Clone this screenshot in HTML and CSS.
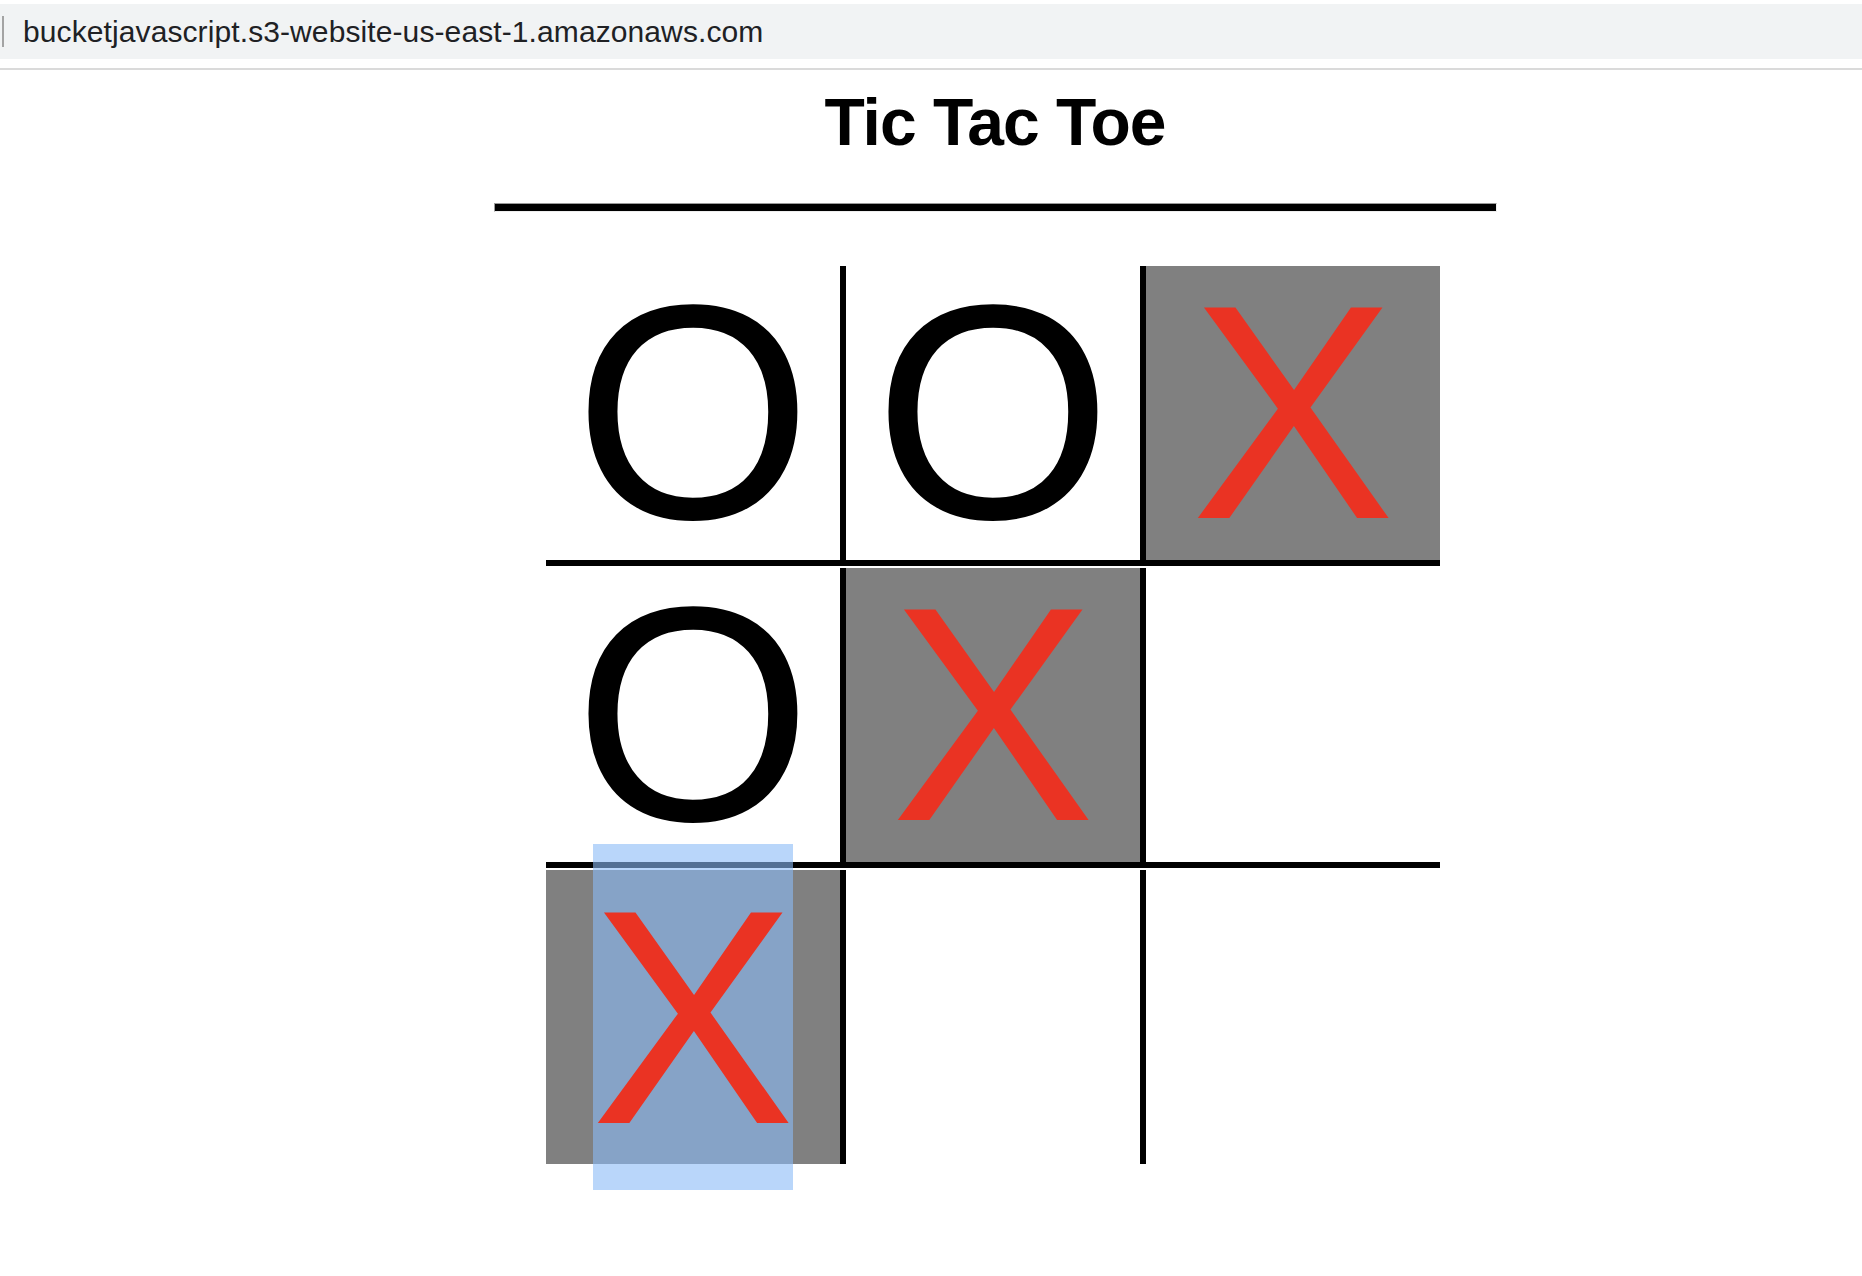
FILE: index.html
```html
<!DOCTYPE html>
<html lang="en">
<head>
<meta charset="utf-8">
<title>Tic Tac Toe</title>
<link rel="stylesheet" href="styles.css">
</head>
<body>
<div class="chrome">
  <div class="urlbar">
    <span class="caret"></span>
    <span class="url">bucketjavascript.s3-website-us-east-1.amazonaws.com</span>
  </div>
  <div class="chrome-line"></div>
</div>
<main class="page">
  <h1 class="title">Tic Tac Toe</h1>
  <hr class="rule">
  <div class="board">
    <div class="cell">O</div>
    <div class="cell mid">O</div>
    <div class="cell win x">X</div>
    <div class="cell">O</div>
    <div class="cell mid win x">X</div>
    <div class="cell"></div>
    <div class="cell last win x"><span class="sel">X</span></div>
    <div class="cell mid last"></div>
    <div class="cell last"></div>
  </div>
</main>
</body>
</html>
```

FILE: styles.css
```css
html, body {
  margin: 0;
  padding: 0;
  background: #ffffff;
}

body {
  min-height: 1276px;
}

.chrome {
  padding-top: 4px;
}

.urlbar {
  height: 55px;
  background: #f1f3f4;
  display: flex;
  align-items: center;
  padding-left: 2px;
}

.caret {
  width: 2px;
  height: 31px;
  background: #a3a3a3;
  margin-right: 19px;
}

.url {
  font-family: "Liberation Sans", Arial, sans-serif;
  font-size: 30px;
  line-height: 55px;
  letter-spacing: 0.1px;
  color: #202124;
}

.chrome-line {
  height: 2px;
  background: #dadada;
  margin-top: 9px;
}

.page {
  padding-left: 128px;
  padding-bottom: 112px;
  display: flex;
  flex-direction: column;
  align-items: center;
  font-family: "Liberation Sans", Arial, sans-serif;
}

.title {
  margin: 14px 0 0;
  font-size: 66px;
  line-height: 76px;
  font-weight: bold;
  letter-spacing: -1px;
  color: #000;
}

.rule {
  box-sizing: border-box;
  width: 1003px;
  height: 9px;
  margin: 43px 0 0;
  background: #000;
  border-width: 1px;
  border-style: solid;
  border-color: #9a9a9a #eeeeee #eeeeee #9a9a9a;
}

.board {
  display: grid;
  grid-template-columns: 294px 306px 294px;
  grid-template-rows: 300px 300px 294px;
  row-gap: 2px;
  margin-top: 54px;
  margin-left: -4px;
}

.cell {
  box-sizing: border-box;
  border-bottom: 6px solid #000;
  padding-bottom: 2px;
  display: flex;
  align-items: center;
  justify-content: center;
  font-size: 306px;
  line-height: normal;
  color: #000;
}

.cell.last {
  border-bottom: 0;
}

.cell.mid {
  border-left: 6px solid #000;
  border-right: 6px solid #000;
}

.win {
  background: #808080;
}

.x {
  color: #ea3323;
}

.sel {
  display: flex;
  align-items: center;
  justify-content: center;
  width: 200px;
  height: 346px;
  margin: -26px 0 -28px;
  background: rgba(138, 187, 247, 0.6);
}
```
